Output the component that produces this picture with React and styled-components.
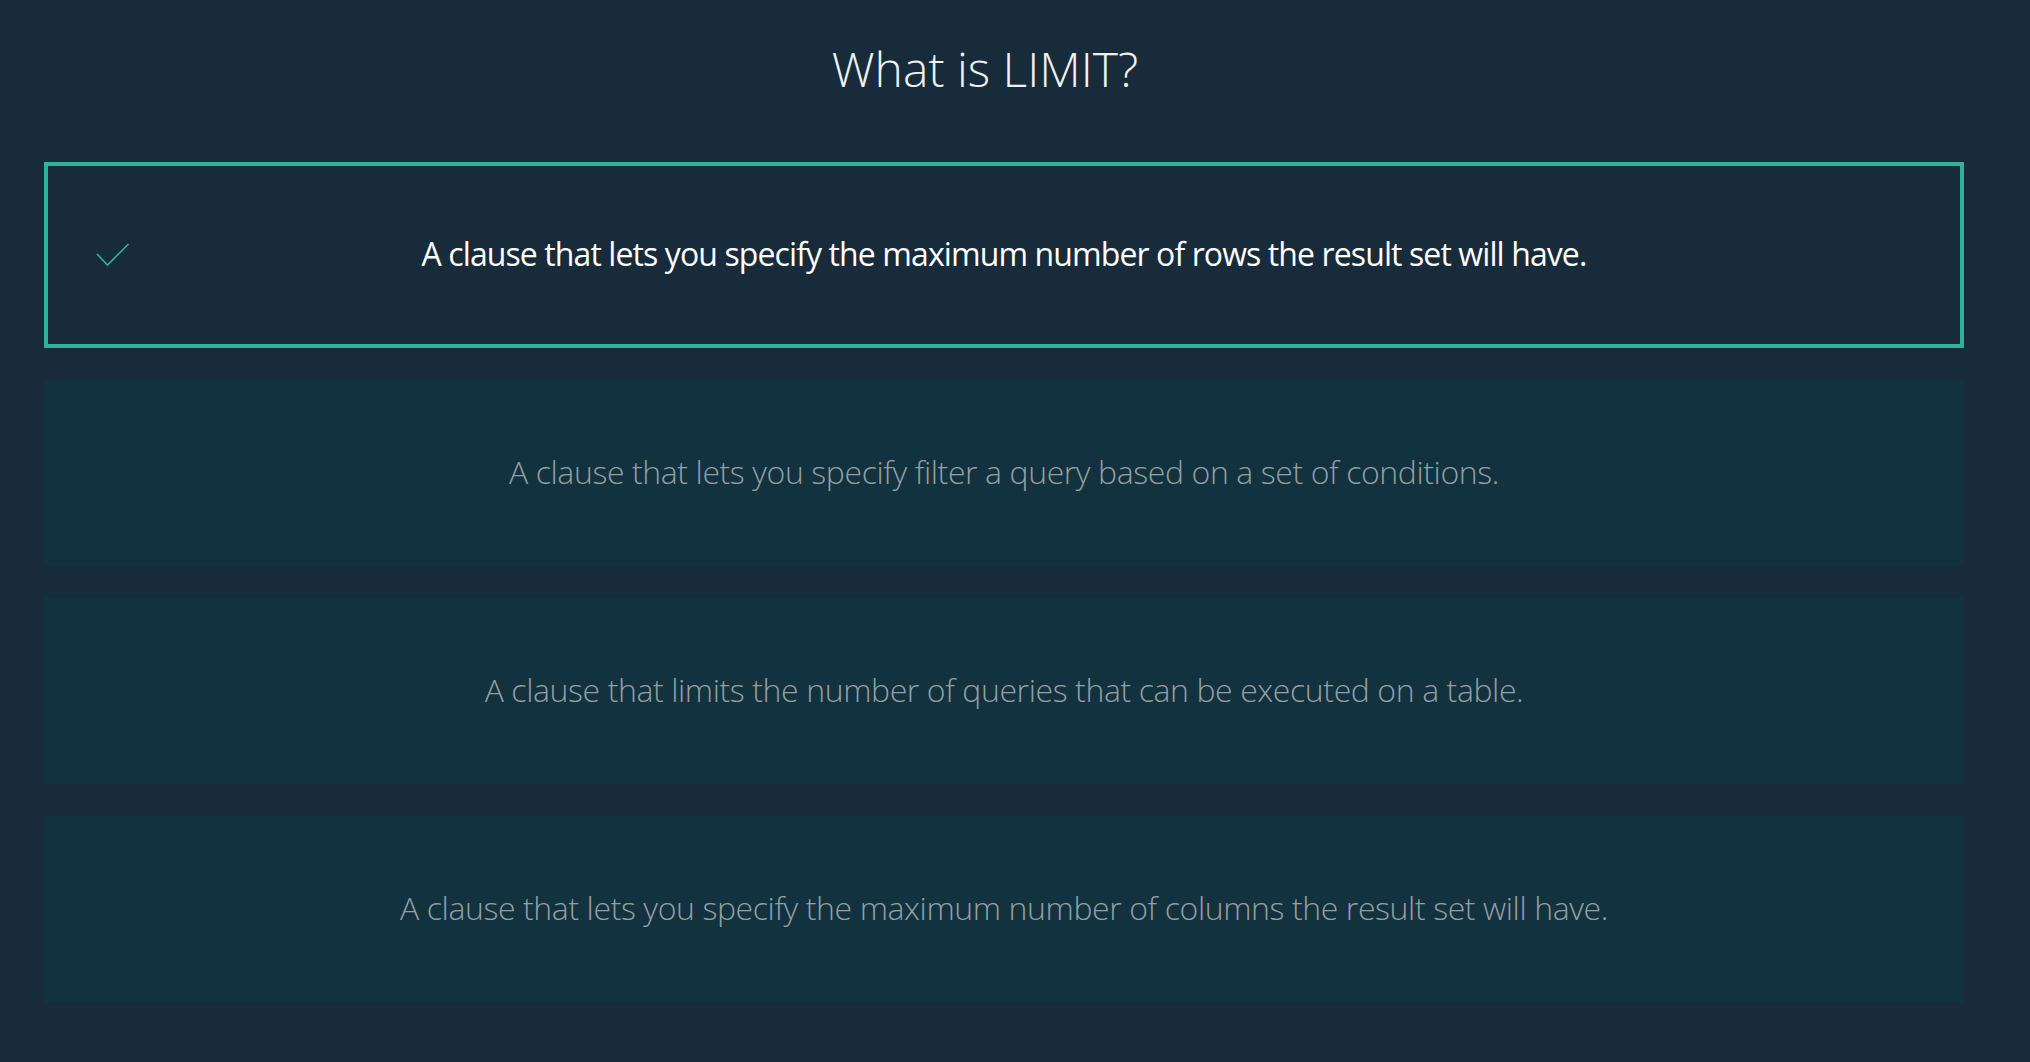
import React from "react";
import styled, { createGlobalStyle } from "styled-components";

const GlobalStyle = createGlobalStyle`
  html, body {
    margin: 0;
    padding: 0;
    background: #172b3a;
  }
  body {
    font-family: "Open Sans", "Liberation Sans", sans-serif;
  }
`;

const Page = styled.main`
  min-height: 1062px;
  box-sizing: border-box;
  padding: 0 66px 0 44px;
  background: #172b3a;
`;

const Title = styled.h1`
  margin: 0;
  padding: 36px 38px 0 0;
  height: 162px;
  box-sizing: border-box;
  text-align: center;
  font-weight: 300;
  font-size: 48px;
  line-height: 66px;
  color: #eef1f2;
`;

const Options = styled.ul`
  list-style: none;
  margin: 0;
  padding: 0;
  display: flex;
  flex-direction: column;
  gap: 32px;
`;

const Option = styled.li`
  height: 186px;
  box-sizing: border-box;
  display: grid;
  grid-template-columns: 1fr auto 1fr;
  align-items: center;
  background: ${p => (p.$selected ? "#172b3a" : "#12323f")};
  border: 4px solid ${p => (p.$selected ? "#2eb39a" : "transparent")};
  cursor: pointer;
`;

const Mark = styled.span`
  padding-left: 48px;
  display: flex;
  align-items: center;
`;

const Label = styled.span`
  padding-bottom: 4px;
  font-size: 32px;
  font-weight: ${p => (p.$selected ? 400 : 300)};
  letter-spacing: ${p => (p.$selected ? "-0.9px" : "-0.4px")};
  color: ${p => (p.$selected ? "#ffffff" : "#949fa3")};
  white-space: nowrap;
`;

const Check = () => (
  <svg width="34" height="24" viewBox="0 0 34 24" fill="none">
    <polyline points="1,11 11.5,22 32.5,1" stroke="#2eb39a" strokeWidth="1.6" />
  </svg>
);

const answers = [
  { text: "A clause that lets you specify the maximum number of rows the result set will have.", selected: true },
  { text: "A clause that lets you specify filter a query based on a set of conditions." },
  { text: "A clause that limits the number of queries that can be executed on a table." },
  { text: "A clause that lets you specify the maximum number of columns the result set will have." },
];

export default function App() {
  return (
    <Page>
      <GlobalStyle />
      <Title>What is LIMIT?</Title>
      <Options>
        {answers.map(a => (
          <Option key={a.text} $selected={a.selected}>
            <Mark>{a.selected && <Check />}</Mark>
            <Label $selected={a.selected}>{a.text}</Label>
            <span />
          </Option>
        ))}
      </Options>
    </Page>
  );
}
